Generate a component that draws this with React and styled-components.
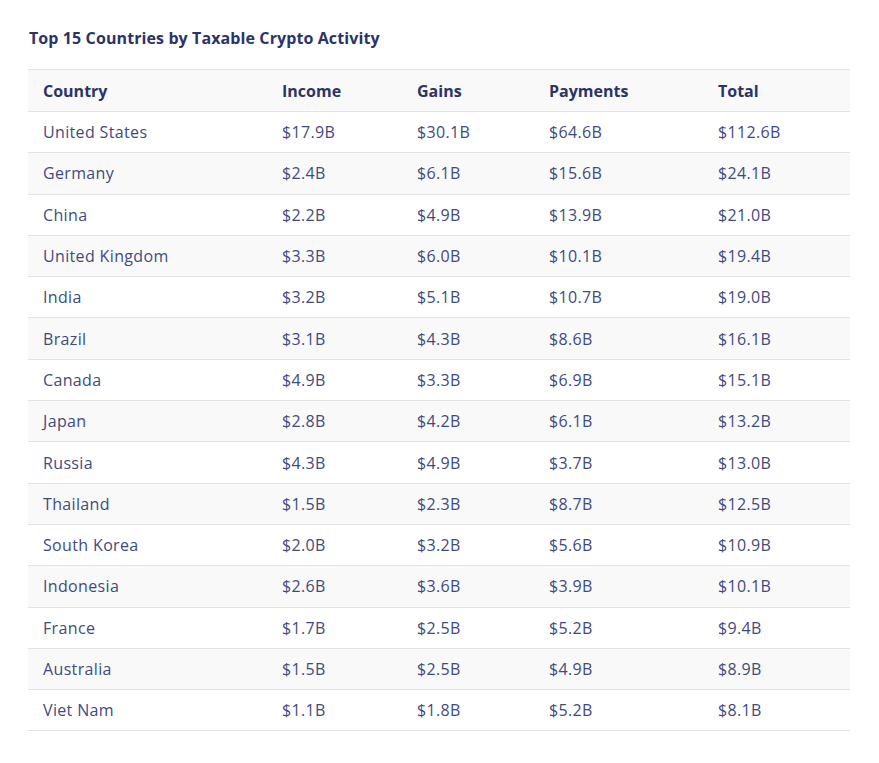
import React from "react";
import styled, { createGlobalStyle } from "styled-components";

const GlobalStyle = createGlobalStyle`
  body {
    margin: 0;
    background: #ffffff;
    font-family: "Open Sans", "Liberation Sans", sans-serif;
  }
`;

const Page = styled.div`
  padding: 27px 28px 0 28px;
  width: 822px;
`;

const Title = styled.h3`
  margin: 0 0 20px 1px;
  font-size: 16px;
  font-weight: 700;
  line-height: 22px;
  letter-spacing: 0.1px;
  color: #2b3467;
`;

const Table = styled.table`
  width: 822px;
  border-collapse: collapse;
  table-layout: fixed;
  border-top: 1px solid #e3e3e3;
`;

const HeadCell = styled.th`
  width: ${({ w }) => w - 30}px;
  height: 41px;
  padding: 0 15px;
  text-align: left;
  font-size: 16px;
  font-weight: 700;
  color: #2b3467;
  background: #f9f9f9;
  border-bottom: 1px solid #e3e3e3;
`;

const Row = styled.tr`
  background: ${({ striped }) => (striped ? "#f9f9f9" : "#ffffff")};
  border-bottom: 1px solid #e3e3e3;
`;

const Cell = styled.td`
  height: 40.3px;
  padding: 0 15px;
  font-size: 16px;
  letter-spacing: 0.35px;
  color: #3f4b7e;
  white-space: nowrap;
`;

const columns = [
  { label: "Country", w: 239 },
  { label: "Income", w: 135 },
  { label: "Gains", w: 132 },
  { label: "Payments", w: 169 },
  { label: "Total", w: 147 },
];

const rows = [
  ["United States", "$17.9B", "$30.1B", "$64.6B", "$112.6B"],
  ["Germany", "$2.4B", "$6.1B", "$15.6B", "$24.1B"],
  ["China", "$2.2B", "$4.9B", "$13.9B", "$21.0B"],
  ["United Kingdom", "$3.3B", "$6.0B", "$10.1B", "$19.4B"],
  ["India", "$3.2B", "$5.1B", "$10.7B", "$19.0B"],
  ["Brazil", "$3.1B", "$4.3B", "$8.6B", "$16.1B"],
  ["Canada", "$4.9B", "$3.3B", "$6.9B", "$15.1B"],
  ["Japan", "$2.8B", "$4.2B", "$6.1B", "$13.2B"],
  ["Russia", "$4.3B", "$4.9B", "$3.7B", "$13.0B"],
  ["Thailand", "$1.5B", "$2.3B", "$8.7B", "$12.5B"],
  ["South Korea", "$2.0B", "$3.2B", "$5.6B", "$10.9B"],
  ["Indonesia", "$2.6B", "$3.6B", "$3.9B", "$10.1B"],
  ["France", "$1.7B", "$2.5B", "$5.2B", "$9.4B"],
  ["Australia", "$1.5B", "$2.5B", "$4.9B", "$8.9B"],
  ["Viet Nam", "$1.1B", "$1.8B", "$5.2B", "$8.1B"],
];

export default function App() {
  return (
    <>
      <GlobalStyle />
      <Page>
        <Title>Top 15 Countries by Taxable Crypto Activity</Title>
        <Table>
          <thead>
            <tr>
              {columns.map((c) => (
                <HeadCell key={c.label} w={c.w}>
                  {c.label}
                </HeadCell>
              ))}
            </tr>
          </thead>
          <tbody>
            {rows.map((r, i) => (
              <Row key={r[0]} striped={i % 2 === 1}>
                {r.map((v, j) => (
                  <Cell key={j}>{v}</Cell>
                ))}
              </Row>
            ))}
          </tbody>
        </Table>
      </Page>
    </>
  );
}
